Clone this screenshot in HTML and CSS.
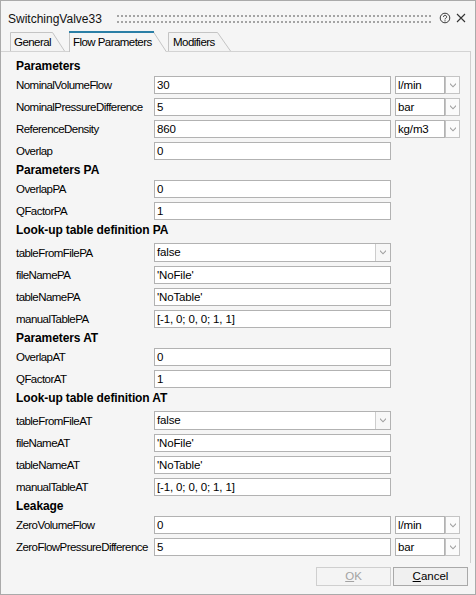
FILE: index.html
```html
<!DOCTYPE html>
<html>
<head>
<meta charset="utf-8">
<link rel="stylesheet" href="styles.css">
</head>
<body>
<div class="window">
  <div class="titlebar">
    <span class="title">SwitchingValve33</span>
    <div class="grip"><div class="dots"></div><div class="dots"></div></div>
    <svg class="help" width="12" height="12" viewBox="0 0 12 12"><circle cx="6" cy="6" r="4.8" fill="none" stroke="#3a3a3a" stroke-width="1"/><path d="M4.5 4.9 A1.55 1.55 0 1 1 6.8 6.2 C6.2 6.55 6 6.8 6 7.4" fill="none" stroke="#3a3a3a" stroke-width="1"/><circle cx="6" cy="8.8" r="0.65" fill="#3a3a3a"/></svg>
    <svg class="close" width="10" height="10" viewBox="0 0 10 10"><path d="M1 1 L9 9 M9 1 L1 9" stroke="#333" stroke-width="1.1"/></svg>
  </div>
  <div class="tabs">
    <div class="tab t-general">
      <svg class="tab-bg" width="55" height="19" viewBox="0 0 55 19"><path d="M0 19 V0 H42.5 L55 19 Z" fill="#f3f3f3"/><path d="M0.5 19 V0.5 H42.5 L54.5 19" fill="none" stroke="#c4c4c4" stroke-width="1"/></svg>
      <span class="tab-text">General</span>
    </div>
    <div class="tab t-flow active">
      <svg class="tab-bg" width="98" height="21" viewBox="0 0 98 21"><path d="M0 0 H84 L98 21 H0 Z" fill="#f5f5f5"/><path d="M0.5 21 V1 M84.5 1 L97.5 21" fill="none" stroke="#c4c4c4" stroke-width="1"/><rect x="0" y="0" width="85" height="2" fill="#2b7fa6"/></svg>
      <span class="tab-text">Flow Parameters</span>
    </div>
    <div class="tab t-mod">
      <svg class="tab-bg" width="63" height="19" viewBox="0 0 63 19"><path d="M0 19 V0 H49.5 L63 19 Z" fill="#f3f3f3"/><path d="M0.5 19 V0.5 H49.5 L62.5 19" fill="none" stroke="#c4c4c4" stroke-width="1"/></svg>
      <span class="tab-text">Modifiers</span>
    </div>
  </div>
  <div class="pane">
    <div class="hdr">Parameters</div>
    <div class="row"><span class="lbl">NominalVolumeFlow</span><div class="field">30</div><div class="unit">l/min</div><div class="unit-btn"><svg width="6" height="5" viewBox="0 0 6 5"><path d="M0 0 L3 3 L6 0 V1.6 L3 4.6 L0 1.6 Z" fill="#a0a0a0"/></svg></div></div>
    <div class="row"><span class="lbl">NominalPressureDifference</span><div class="field">5</div><div class="unit">bar</div><div class="unit-btn"><svg width="6" height="5" viewBox="0 0 6 5"><path d="M0 0 L3 3 L6 0 V1.6 L3 4.6 L0 1.6 Z" fill="#a0a0a0"/></svg></div></div>
    <div class="row"><span class="lbl">ReferenceDensity</span><div class="field">860</div><div class="unit">kg/m3</div><div class="unit-btn"><svg width="6" height="5" viewBox="0 0 6 5"><path d="M0 0 L3 3 L6 0 V1.6 L3 4.6 L0 1.6 Z" fill="#a0a0a0"/></svg></div></div>
    <div class="row"><span class="lbl">Overlap</span><div class="field">0</div></div>

    <div class="hdr">Parameters PA</div>
    <div class="row"><span class="lbl">OverlapPA</span><div class="field">0</div></div>
    <div class="row"><span class="lbl">QFactorPA</span><div class="field">1</div></div>

    <div class="hdr">Look-up table definition PA</div>
    <div class="row tall"><span class="lbl">tableFromFilePA</span><div class="combo"><span class="combo-text">false</span><span class="combo-btn"><svg width="6" height="5" viewBox="0 0 6 5"><path d="M0 0 L3 3 L6 0 V1.6 L3 4.6 L0 1.6 Z" fill="#a0a0a0"/></svg></span></div></div>
    <div class="row"><span class="lbl">fileNamePA</span><div class="field">'NoFile'</div></div>
    <div class="row"><span class="lbl">tableNamePA</span><div class="field">'NoTable'</div></div>
    <div class="row"><span class="lbl">manualTablePA</span><div class="field">[-1, 0; 0, 0; 1, 1]</div></div>

    <div class="hdr">Parameters AT</div>
    <div class="row"><span class="lbl">OverlapAT</span><div class="field">0</div></div>
    <div class="row"><span class="lbl">QFactorAT</span><div class="field">1</div></div>

    <div class="hdr">Look-up table definition AT</div>
    <div class="row tall"><span class="lbl">tableFromFileAT</span><div class="combo"><span class="combo-text">false</span><span class="combo-btn"><svg width="6" height="5" viewBox="0 0 6 5"><path d="M0 0 L3 3 L6 0 V1.6 L3 4.6 L0 1.6 Z" fill="#a0a0a0"/></svg></span></div></div>
    <div class="row"><span class="lbl">fileNameAT</span><div class="field">'NoFile'</div></div>
    <div class="row"><span class="lbl">tableNameAT</span><div class="field">'NoTable'</div></div>
    <div class="row"><span class="lbl">manualTableAT</span><div class="field">[-1, 0; 0, 0; 1, 1]</div></div>

    <div class="hdr">Leakage</div>
    <div class="row"><span class="lbl">ZeroVolumeFlow</span><div class="field">0</div><div class="unit">l/min</div><div class="unit-btn"><svg width="6" height="5" viewBox="0 0 6 5"><path d="M0 0 L3 3 L6 0 V1.6 L3 4.6 L0 1.6 Z" fill="#a0a0a0"/></svg></div></div>
    <div class="row"><span class="lbl">ZeroFlowPressureDifference</span><div class="field">5</div><div class="unit">bar</div><div class="unit-btn"><svg width="6" height="5" viewBox="0 0 6 5"><path d="M0 0 L3 3 L6 0 V1.6 L3 4.6 L0 1.6 Z" fill="#a0a0a0"/></svg></div></div>
  </div>
  <div class="buttons">
    <div class="btn disabled"><u>O</u>K</div>
    <div class="btn"><u>C</u>ancel</div>
  </div>
</div>
</body>
</html>
```
FILE: styles.css
```css
* { box-sizing: border-box; }
html, body { margin: 0; padding: 0; background: #f5f5f5; }
body { font-family: "Liberation Sans", Arial, sans-serif; color: #000; }

.window {
  width: 476px;
  height: 595px;
  border: 1px solid #aaaaaa;
  background: #f5f5f5;
  display: flex;
  flex-direction: column;
}

.titlebar {
  height: 30px;
  flex: none;
  display: flex;
  align-items: center;
  padding: 6px 9px 0 7px;
}
.title { font-size: 12px; line-height: 16px; color: #111; }
.grip {
  flex: 1;
  margin-left: 15px;
  height: 8px;
  display: flex;
  flex-direction: column;
  justify-content: space-between;
}
.dots {
  height: 2px;
  background: repeating-linear-gradient(90deg, #a4a4a4 0 2px, transparent 2px 4px);
}
.help { margin-left: 7px; margin-bottom: 3px; flex: none; }
.close { margin-left: 5px; margin-bottom: 3px; flex: none; }

.tabs {
  height: 20px;
  flex: none;
  display: flex;
  align-items: flex-end;
  padding-left: 9px;
  position: relative;
  z-index: 2;
}
.tab {
  position: relative;
  height: 19px;
  display: flex;
  align-items: center;
  font-size: 11.5px;
  letter-spacing: -0.55px;
  color: #000;
}
.tab-bg { position: absolute; left: 0; top: 0; }
.tab-text { position: relative; line-height: 14px; }
.t-general { width: 55px; padding-left: 4px; }
.t-flow { width: 98px; height: 21px; margin-left: 4px; margin-bottom: -1px; padding-left: 4px; }
.t-mod { width: 63px; margin-left: 1px; padding-left: 5px; }

.pane {
  flex: none;
  height: 512px;
  margin-right: 4px;
  border-top: 1px solid #d3d3d3;
  border-right: 1px solid #cfcfcf;
  padding: 6px 0 0 15px;
}

.hdr {
  height: 16px;
  line-height: 16px;
  font-size: 12px;
  font-weight: bold;
  letter-spacing: -0.1px;
  color: #000;
}
.row {
  height: 22px;
  display: flex;
  align-items: center;
}
.row.tall { height: 26px; padding-top: 3px; }
.lbl {
  width: 138px;
  flex: none;
  font-size: 11.5px;
  letter-spacing: -0.55px;
  white-space: nowrap;
  color: #000;
}
.field {
  width: 237px;
  height: 18px;
  flex: none;
  border: 1px solid #b2b2b2;
  background: #fff;
  padding-left: 2px;
  font-size: 11.5px;
  letter-spacing: -0.15px;
  line-height: 16px;
  color: #000;
  white-space: nowrap;
}
.unit {
  width: 50px;
  height: 18px;
  margin-left: 4px;
  border: 1px solid #b2b2b2;
  background: #fff;
  padding-left: 2px;
  font-size: 11.5px;
  letter-spacing: -0.15px;
  line-height: 16px;
  color: #000;
}
.unit-btn {
  width: 15px;
  height: 18px;
  border: 1px solid #c4c4c4;
  background: #fbfbfb;
  display: flex;
  align-items: center;
  justify-content: center;
}
.combo {
  width: 237px;
  height: 19px;
  border: 1px solid #b2b2b2;
  background: #fff;
  display: flex;
}
.combo-text {
  flex: 1;
  padding-left: 2px;
  font-size: 11.5px;
  letter-spacing: -0.15px;
  line-height: 17px;
  color: #000;
}
.combo-btn {
  width: 15px;
  border-left: 1px solid #cdcdcd;
  background: #f7f7f7;
  display: flex;
  align-items: center;
  justify-content: center;
}

.buttons {
  flex: none;
  display: flex;
  justify-content: flex-end;
  gap: 2px;
  padding-right: 7px;
  margin-top: 4px;
}
.btn {
  width: 75px;
  height: 19px;
  border: 1px solid #a9a9a9;
  background: #f0f0f0;
  font-size: 11.5px;
  line-height: 17px;
  text-align: center;
  color: #000;
}
.btn.disabled {
  border-color: #cfcfcf;
  background: #f4f4f4;
  color: #a3a3a3;
}
```
